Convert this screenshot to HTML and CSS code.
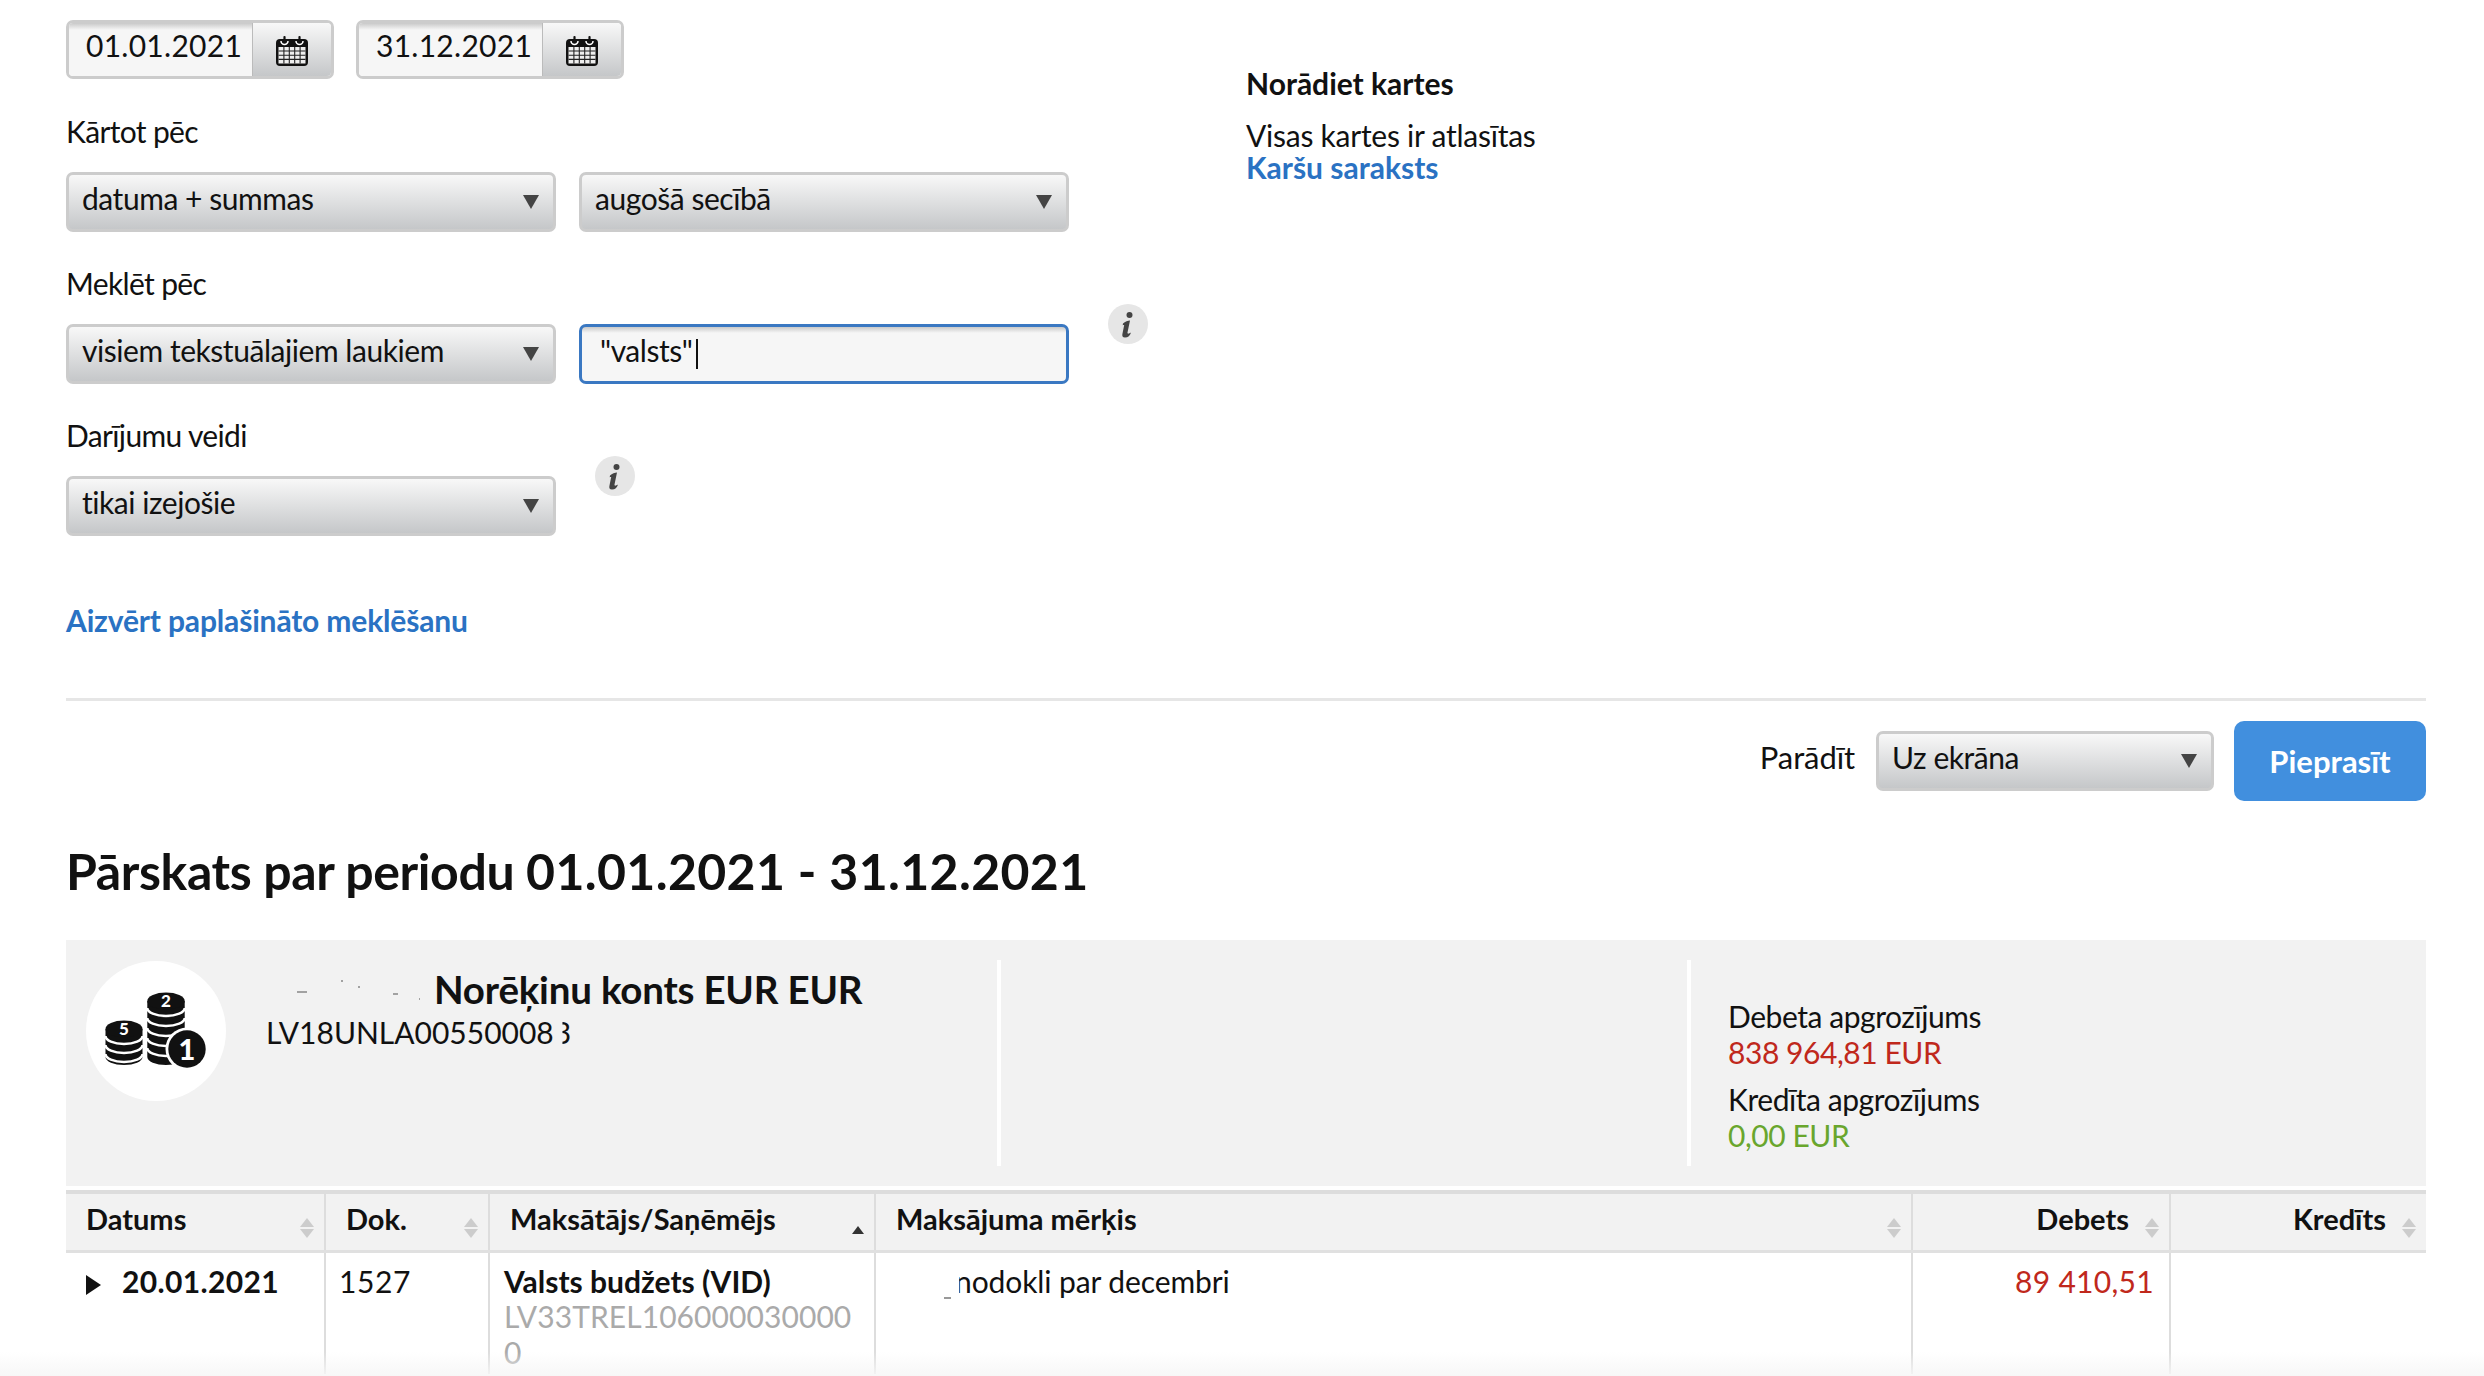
FILE: index.html
```html
<!DOCTYPE html>
<html lang="lv">
<head>
<meta charset="utf-8">
<title>Pārskats</title>
<link rel="stylesheet" href="styles.css">
</head>
<body>
<svg class="defs" width="0" height="0" aria-hidden="true">
  <symbol id="cal" viewBox="0 0 32 30">
    <path d="M4 3h24a4 4 0 0 1 4 4v19a4 4 0 0 1-4 4H4a4 4 0 0 1-4-4V7a4 4 0 0 1 4-4z" fill="#111"/>
    <path d="M5 5a3.500 3.500 0 0 0 7 0M20 5a3.500 3.500 0 0 0 7 0" fill="none" stroke="#fff" stroke-width="1.500"/>
    <rect x="7.400" y="0" width="2.200" height="6.500" rx="1" fill="#111"/><rect x="22.400" y="0" width="2.200" height="6.500" rx="1" fill="#111"/>
    <rect x="2.500" y="11" width="27" height="16.500" fill="#eee"/>
    <path d="M2.500 15h27M2.500 19.200h27M2.500 23.400h27M7.900 11v16.500M13.300 11v16.500M18.700 11v16.500M24.100 11v16.500" stroke="#222" stroke-width="1.100" fill="none"/>
  </symbol>
  <symbol id="info" viewBox="0 0 40 40">
    <circle cx="20" cy="20" r="20" fill="#e6e6e6"/>
    <circle cx="21.500" cy="11" r="3" fill="#444"/>
    <path d="M15 19.500c2-2 5-3 7-3l-2.500 12c-.2 1.300.8 1.700 3.500 0-.8 3-3 5-6 5-2.500 0-3-1.700-2.600-3.500l1.800-9c-.5 0-1 .1-1.500.3z" fill="#444"/>
  </symbol>
</svg>

<main class="page">
  <section class="filters">
    <div class="form">
      <div class="dates">
        <div class="date"><span class="date-value">01.01.2021</span><span class="date-btn"><svg class="cal"><use href="#cal"/></svg></span></div>
        <div class="date"><span class="date-value">31.12.2021</span><span class="date-btn"><svg class="cal"><use href="#cal"/></svg></span></div>
      </div>
      <div class="field-label">Kārtot pēc</div>
      <div class="fields">
        <div class="select">datuma + summas</div>
        <div class="select">augošā secībā</div>
      </div>
      <div class="field-label">Meklēt pēc</div>
      <div class="fields">
        <div class="select">visiem tekstuālajiem laukiem</div>
        <div class="search">"valsts"<span class="caret"></span></div>
        <svg class="info info-search"><use href="#info"/></svg>
      </div>
      <div class="field-label">Darījumu veidi</div>
      <div class="fields">
        <div class="select">tikai izejošie</div>
        <svg class="info info-type"><use href="#info"/></svg>
      </div>
      <a class="link close-link" href="#">Aizvērt paplašināto meklēšanu</a>
    </div>
    <aside class="cards">
      <h3 class="cards-title">Norādiet kartes</h3>
      <div class="cards-text">Visas kartes ir atlasītas</div>
      <a class="link cards-link" href="#">Karšu saraksts</a>
    </aside>
  </section>

  <hr class="rule">

  <div class="actions">
    <span class="show-label">Parādīt</span>
    <div class="select select-show">Uz ekrāna</div>
    <button class="submit" type="button">Pieprasīt</button>
  </div>

  <h1 class="report-title"><span class="title-words">Pārskats par periodu </span><span class="title-dates">01.01.2021 - 31.12.2021</span></h1>

  <section class="account">
    <div class="account-main">
      <div class="avatar">
        <svg width="140" height="140" viewBox="0 0 140 140">
          <path d="M61.300 40v56a18.700 8 0 0 0 37.400 0V40z" fill="#111"/>
          <path d="M61.300 47a18.700 8 0 0 0 37.400 0M61.300 57a18.700 8 0 0 0 37.400 0M61.300 67a18.700 8 0 0 0 37.400 0M61.300 77a18.700 8 0 0 0 37.400 0M61.300 87a18.700 8 0 0 0 37.400 0" fill="none" stroke="#fff" stroke-width="2.500"/>
          <ellipse cx="80" cy="40" rx="18.700" ry="8.500" fill="#111"/>
          <text class="coin-num" x="80" y="46" text-anchor="middle">2</text>
          <path d="M19.500 68v28a18.500 8 0 0 0 37 0V68z" fill="#111"/>
          <path d="M19.500 75a18.500 8 0 0 0 37 0M19.500 84a18.500 8 0 0 0 37 0M19.500 93a18.500 8 0 0 0 37 0" fill="none" stroke="#fff" stroke-width="2.500"/>
          <ellipse cx="38" cy="68" rx="18.500" ry="8.500" fill="#111"/>
          <text class="coin-num" x="38" y="74" text-anchor="middle">5</text>
          <circle cx="101" cy="88" r="21.500" fill="#fff"/>
          <circle cx="101" cy="88" r="18.700" fill="#111"/>
          <text class="coin-big" x="101" y="98.500" text-anchor="middle">1</text>
        </svg>
      </div>
      <div class="account-name">
        <div class="account-title"><svg class="smudge" width="168" height="30"><path d="M31 18h10M75 7h2M92 13h2M127 20h5M153 25h1" stroke="#888" stroke-width="1.500"/></svg>Norēķinu konts EUR EUR</div>
        <div class="account-iban">LV18UNLA00550008<span class="cut-3">3</span></div>
      </div>
    </div>
    <div class="account-mid"></div>
    <div class="account-totals">
      <div class="total-label">Debeta apgrozījums</div>
      <div class="total-debit">838 964,81 EUR</div>
      <div class="total-label total-gap">Kredīta apgrozījums</div>
      <div class="total-credit">0,00 EUR</div>
    </div>
  </section>

  <table class="ledger">
    <colgroup>
      <col class="c-date"><col class="c-doc"><col class="c-party"><col class="c-purpose"><col class="c-debit"><col class="c-credit">
    </colgroup>
    <thead>
      <tr>
        <th class="th-date"><span>Datums</span><i class="sort"></i></th>
        <th class="th-doc"><span>Dok.</span><i class="sort"></i></th>
        <th class="th-party"><span>Maksātājs/Saņēmējs</span><i class="sort-up"></i></th>
        <th class="th-purpose"><span>Maksājuma mērķis</span><i class="sort"></i></th>
        <th class="th-num"><span>Debets</span><i class="sort"></i></th>
        <th class="th-num"><span>Kredīts</span><i class="sort"></i></th>
      </tr>
    </thead>
    <tbody>
      <tr>
        <td class="td-date"><i class="expand"></i>20.01.2021</td>
        <td class="td-doc">1527</td>
        <td class="td-party"><strong>Valsts budžets (VID)</strong><div class="party-iban">LV33TREL106000030000<br>0</div></td>
        <td class="td-purpose"><span class="smudge-row"></span><span class="cut-n">n</span>odokli par decembri</td>
        <td class="td-debit">89 410,51</td>
        <td></td>
      </tr>
    </tbody>
  </table>
</main>
<div class="fade"></div>
</body>
</html>
```

FILE: styles.css
```css
* { box-sizing: border-box; }
html, body { margin: 0; height: 1376px; overflow: hidden; background: #fff; }
body { font-family: Lato, "Noto Sans", sans-serif; font-size: 30px; font-weight: 400; color: #111; letter-spacing: -.45px; font-variant-ligatures: none; }
.defs { position: absolute; }
.page { padding: 20px 58px 0 66px; }

.filters { display: flex; }
.form { width: 1181px; }
.dates { display: flex; gap: 22px; height: 59px; margin-bottom: 33px; }
.date { display: flex; width: 268px; border: 3px solid #ccc; border-radius: 7px; overflow: hidden; }
.date-value { width: 183px; padding: 0 0 0 17px; line-height: 44px; background: linear-gradient(#c9c9c9, #f6f6f6 7px); letter-spacing: .27px; }
.date-btn { flex: 1; display: flex; align-items: center; justify-content: center; padding-top: 2px; background: linear-gradient(#f8f8f8, #c5c7c9); border-left: 1px solid #bbb; }
.cal { width: 32px; height: 30px; }

.field-label { height: 40px; line-height: 38px; margin-bottom: 20px; letter-spacing: -.65px; }
.fields { display: flex; gap: 23px; height: 60px; margin-bottom: 32px; position: relative; }
.select { position: relative; width: 490px; height: 60px; padding-left: 13px; line-height: 46px; border: 3px solid #ccc; border-radius: 7px; background: linear-gradient(#f8f8f8, #c5c7c9); }
.select::after { content: ""; position: absolute; right: 14px; top: 20px; border: 8.500px solid transparent; border-top: 14px solid #444; border-bottom: 0; }
.search { width: 490px; height: 60px; padding-left: 18px; line-height: 46px; border: 3px solid #3a78c2; border-radius: 7px; background: linear-gradient(#c9c9c9, #f6f6f6 6px); }
.caret { display: inline-block; width: 2px; height: 30px; margin-left: 3px; background: #111; vertical-align: -7px; }
.info { position: absolute; width: 40px; height: 40px; }
.info-search { left: 1042px; top: -20px; }
.info-type { left: 529px; top: -20px; }

.link { color: #2a72c3; font-weight: 700; letter-spacing: -.16px; text-decoration: none; }
.close-link { display: block; height: 40px; line-height: 40px; margin-top: 64px; }

.cards { padding-top: 43px; margin-left: -1px; }
.cards-title { margin: 0 0 17px; height: 40px; line-height: 40px; font-size: 30px; font-weight: 700; letter-spacing: 0; }
.cards-text { line-height: 31px; letter-spacing: -.25px; }
.cards-link { display: block; line-height: 33px; letter-spacing: 0; }

.rule { height: 3px; margin: 58px 0 20px; border: 0; background: #e6e6e6; }
.actions { display: flex; justify-content: flex-end; align-items: center; height: 80px; }
.show-label { margin-right: 21px; position: relative; top: -4px; font-size: 31px; letter-spacing: -.1px; }
.select-show { width: 338px; margin-right: 20px; }
.submit { width: 192px; height: 80px; border: 0; border-radius: 10px; background: #418fde; color: #fff; font: 700 31px Lato, "Noto Sans", sans-serif; }

.report-title { margin: 40px 0 39px; height: 60px; line-height: 60px; font-size: 50px; font-weight: 700; letter-spacing: 0; }
.title-words { letter-spacing: -.38px; }
.title-dates { letter-spacing: .35px; }

.account { display: flex; height: 246px; padding: 20px 0; background: #f2f2f2; }
.account-main { display: flex; width: 935px; padding-left: 20px; border-right: 4px solid #fff; }
.avatar { width: 140px; height: 140px; margin-top: 1px; border-radius: 50%; background: #fff; }
.coin-num { font-size: 17px; font-weight: 900; fill: #fff; letter-spacing: 0; }
.coin-big { font-size: 29px; font-weight: 900; fill: #fff; letter-spacing: 0; }
.account-name { padding: 6px 0 0 40px; }
.account-title { display: flex; align-items: center; height: 46px; font-size: 38.500px; font-weight: 700; letter-spacing: -.2px; white-space: nowrap; }
.account-iban { line-height: 40px; margin-top: 0; letter-spacing: 0; }
.cut-3 { display: inline-block; clip-path: inset(25% 0 0 50%); }
.smudge { flex: none; }
.account-mid { width: 690px; border-right: 4px solid #fff; }
.account-totals { padding: 38px 0 0 37px; line-height: 36px; }
.total-debit { color: #c0281c; }
.total-gap { margin-top: 11px; }
.total-credit { color: #69a62d; }

.ledger { width: 2360px; margin-top: 4px; table-layout: fixed; border-collapse: collapse; border-top: 4px solid #ddd; }
.c-date { width: 259px; }
.c-doc { width: 164px; }
.c-party { width: 386px; }
.c-purpose { width: 1037px; }
.c-debit { width: 258px; }
.ledger th { position: relative; height: 59px; padding: 0 20px 6px; background: #f2f2f2; border-bottom: 3px solid #e0e0e0; border-left: 2px solid #ddd; text-align: left; font-weight: 700; font-size: 29px; letter-spacing: 0; }
.ledger th:first-child, .ledger td:first-child { border-left: 0; }
.ledger .th-num { text-align: right; padding-right: 40px; }
.ledger td { height: 123px; vertical-align: top; padding: 10px 14px 0; border-left: 2px solid #ddd; line-height: 36px; }
.sort, .sort-up { position: absolute; right: 10px; top: 24px; }
.sort::before, .sort::after { content: ""; display: block; border: 7px solid transparent; }
.sort::before { border-bottom: 9px solid #ccc; border-top: 0; margin-bottom: 2px; }
.sort::after { border-top: 9px solid #ccc; border-bottom: 0; }
.sort-up { right: 10px; top: 32px; border: 6px solid transparent; border-bottom: 8px solid #333; border-top: 0; }
.ledger .td-date { padding-left: 20px; font-weight: 700; letter-spacing: .35px; }
.expand { display: inline-block; margin-right: 21px; border: 10px solid transparent; border-left: 15px solid #111; border-right: 0; vertical-align: -2px; }
.ledger .td-doc { letter-spacing: .6px; padding-left: 13px; }
.td-party strong { font-weight: 700; letter-spacing: 0; }
.party-iban { margin-top: -1px; color: #aaa; letter-spacing: .07px; }
.ledger .td-purpose { padding-left: 42px; letter-spacing: -.1px; }
.smudge-row { display: inline-block; width: 37px; height: 2px; background: linear-gradient(90deg, transparent 70%, #999 70%, #999 90%, transparent 90%); vertical-align: -6px; }
.cut-n { display: inline-block; clip-path: inset(0 0 0 25%); }
.ledger .td-debit { text-align: right; color: #c0281c; padding-right: 15px; letter-spacing: .3px; }
.fade { position: absolute; left: 0; right: 0; bottom: 0; height: 24px; background: linear-gradient(rgba(246,246,246,0), rgba(246,246,246,.9)); }
```
